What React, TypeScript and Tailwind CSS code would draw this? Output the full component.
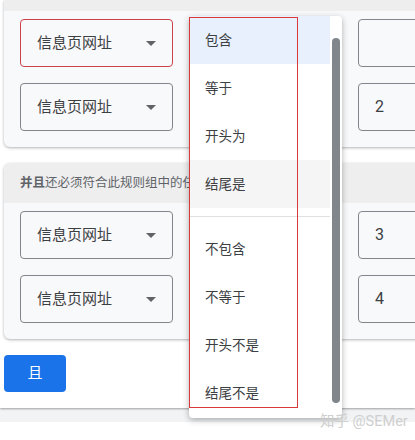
import React from "react";

const FONT = 'Roboto, "Noto Sans CJK SC", "Noto Sans", sans-serif';

function Caret() {
  return (
    <svg width="10" height="5" viewBox="0 0 10 5" className="shrink-0">
      <polygon points="0,0 10,0 5,5" fill="#5f6368" />
    </svg>
  );
}

function FieldSelect({ red }: { red?: boolean }) {
  return (
    <div
      className={
        "flex h-[48px] w-[153px] shrink-0 items-center justify-between rounded-[4px] border bg-[#f8f9fa] pl-4 pr-4 text-[15px] text-[#3c4043] " +
        (red ? "border-[#c9434a]" : "border-[#80868b]")
      }
    >
      <span>信息页网址</span>
      <Caret />
    </div>
  );
}

function OpSelect() {
  return (
    <div className="flex h-[48px] w-[153px] shrink-0 items-center justify-end rounded-[4px] border border-[#80868b] bg-[#f8f9fa] px-4">
      <Caret />
    </div>
  );
}

function ValueInput({ v }: { v: string }) {
  return (
    <div className="flex h-[48px] w-[153px] shrink-0 items-center rounded-[4px] border border-[#80868b] bg-[#f8f9fa] px-4 text-[16px] text-[#3c4043]">
      {v}
    </div>
  );
}

function Row({ v, red }: { v: string; red?: boolean }) {
  return (
    <div className="flex gap-4">
      <FieldSelect red={red} />
      <OpSelect />
      <ValueInput v={v} />
    </div>
  );
}

const items1 = ["包含", "等于", "开头为", "结尾是"];
const items2 = ["不包含", "不等于", "开头不是", "结尾不是"];

export default function App() {
  return (
    <div className="relative h-[440px] w-[415px] overflow-hidden bg-white" style={{ fontFamily: FONT }}>
      <div className="relative bg-white pb-4 pl-[4px] shadow-[0_1px_2px_rgba(0,0,0,0.35)]">
        <div className="flex w-[520px] flex-col gap-4">
          {/* card 1 */}
          <div className="overflow-hidden rounded-b-[6px] bg-[#f8f9fa] shadow-[0_1px_3px_rgba(0,0,0,0.3)]">
            <div className="h-[11px] bg-[#eeeeee]" />
            <div className="flex flex-col gap-4 px-4 pb-4 pt-2">
              <Row v="" red />
              <Row v="2" />
            </div>
          </div>
          {/* card 2 */}
          <div className="overflow-hidden rounded-[6px] bg-[#f8f9fa] shadow-[0_1px_3px_rgba(0,0,0,0.3)]">
            <div className="flex h-[40px] items-center bg-[#eeeeee] px-4">
              <div className="w-[169px] overflow-hidden whitespace-nowrap text-[12.5px] text-[#5f6368]">
                <span className="font-bold">并且</span>
                <span>还必须符合此规则组中的任</span>
              </div>
            </div>
            <div className="flex flex-col gap-4 px-4 pb-4 pt-2">
              <Row v="3" />
              <Row v="4" />
            </div>
          </div>
          <button className="flex h-[37px] w-[62px] items-center justify-center rounded-[4px] bg-[#1a73e8] text-[15px] text-white">
            且
          </button>
        </div>
      </div>
      <div className="h-[14px] bg-[#f1f3f4]" />

      {/* dropdown */}
      <div className="absolute left-[189px] top-[16px] flex h-[402px] w-[153px] rounded-[4px] bg-white shadow-[0_2px_6px_rgba(0,0,0,0.3)]">
        <div className="flex w-[141px] flex-col text-[13.5px] text-[#3c4043]">
          {items1.map((t, i) => (
            <div
              key={t}
              className={
                "flex h-[48px] items-center pl-4 " +
                (i === 0 ? "bg-[#e8f0fe]" : i === 3 ? "bg-[#f5f5f5]" : "")
              }
            >
              {t}
            </div>
          ))}
          <div className="my-2 h-px bg-[#e0e0e0]" />
          {items2.map((t) => (
            <div key={t} className="flex h-[48px] items-center pl-4">
              {t}
            </div>
          ))}
        </div>
        <div className="absolute bottom-[15px] left-[143px] top-[22px] w-[8px] rounded-full bg-[#80868b]" />
      </div>

      {/* annotation box */}
      <div className="pointer-events-none absolute left-[189px] top-[17px] h-[391px] w-[109px]">
        <div className="absolute left-0 right-0 top-0 h-px bg-[#d83a3a]" />
        <div className="absolute bottom-0 left-0 right-0 h-px bg-[#d83a3a]" />
        <div className="absolute bottom-0 left-0 top-0 w-px bg-[#d83a3a]" />
        <div className="absolute bottom-0 right-0 top-0 w-px bg-[#d83a3a]" />
      </div>

      {/* watermark */}
      <div className="absolute left-[320px] top-[411px] whitespace-nowrap text-[14.5px] text-[#cfcfcf]">
        知乎 @SEMer
      </div>
    </div>
  );
}
